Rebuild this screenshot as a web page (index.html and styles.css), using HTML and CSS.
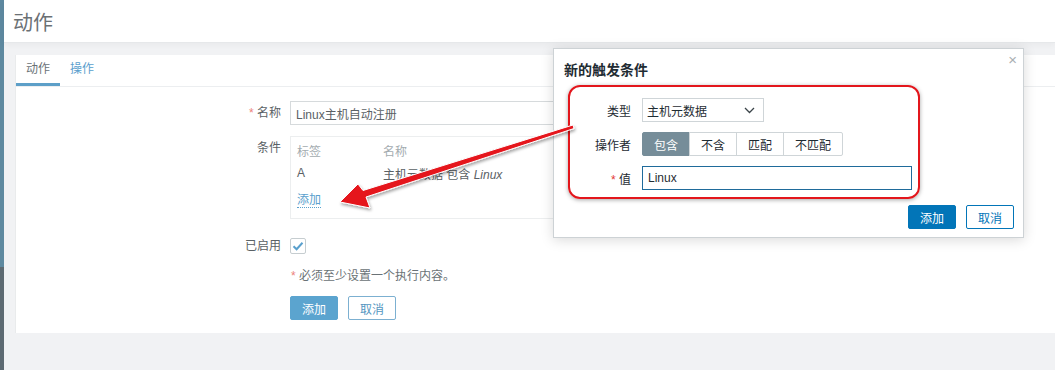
FILE: index.html
```html
<!DOCTYPE html>
<html lang="zh-CN">
<head>
    <meta charset="utf-8">
    <title>动作</title>
    <link rel="stylesheet" href="styles.css">
</head>
<body>
    <div class="layout">
        <aside class="sidebar"></aside>

        <main class="page">
            <header class="page-header">
                <h1>动作</h1>
            </header>

            <div class="page-body">
                <div class="card">
                    <ul class="tabs">
                        <li class="tab active">动作</li>
                        <li class="tab"><a href="#">操作</a></li>
                    </ul>

                    <div class="form">
                        <div class="form-row">
                            <label class="form-label"><span class="req">*</span> 名称</label>
                            <input class="text-input" type="text" value="Linux主机自动注册">
                        </div>

                        <div class="form-row conditions-row">
                            <label class="form-label">条件</label>
                            <div class="conditions">
                                <div class="cond-line cond-head">
                                    <span class="cond-tag">标签</span>
                                    <span>名称</span>
                                </div>
                                <div class="cond-line">
                                    <span class="cond-tag">A</span>
                                    <span>主机元数据 包含 <em>Linux</em></span>
                                </div>
                                <div class="cond-add"><a href="#">添加</a></div>
                            </div>
                        </div>

                        <div class="form-row">
                            <label class="form-label">已启用</label>
                            <span class="checkbox">
                                <svg width="12" height="10" viewBox="0 0 12 10"><path d="M1.5 5.2 L4.6 8.2 L10.5 1.8" fill="none" stroke="#5aa0cd" stroke-width="2"/></svg>
                            </span>
                        </div>

                        <div class="form-row note-row">
                            <span class="req">*</span> 必须至少设置一个执行内容。
                        </div>

                        <div class="form-row buttons-row">
                            <button class="btn btn-primary">添加</button>
                            <button class="btn btn-outline">取消</button>
                        </div>
                    </div>
                </div>
            </div>
        </main>

        <div class="dialog">
            <span class="dialog-close">&times;</span>
            <h2 class="dialog-title">新的触发条件</h2>

            <div class="dialog-body">
                <div class="d-row">
                    <label class="d-label">类型</label>
                    <div class="select">
                        <span>主机元数据</span>
                        <svg width="11" height="7" viewBox="0 0 11 7"><path d="M1 1 L5.5 5.5 L10 1" fill="none" stroke="#3b4449" stroke-width="1.3"/></svg>
                    </div>
                </div>
                <div class="d-row">
                    <label class="d-label">操作者</label>
                    <div class="segmented">
                        <span class="seg on">包含</span>
                        <span class="seg">不含</span>
                        <span class="seg">匹配</span>
                        <span class="seg wide">不匹配</span>
                    </div>
                </div>
                <div class="d-row">
                    <label class="d-label"><span class="req-strong">*</span> 值</label>
                    <input class="text-input focused" type="text" value="Linux">
                </div>
            </div>

            <div class="highlight"></div>

            <div class="dialog-footer">
                <button class="btn btn-blue">添加</button>
                <button class="btn btn-blue-outline">取消</button>
            </div>
        </div>

        <svg class="arrow" width="1055" height="370" viewBox="0 0 1055 370">
            <defs>
                <filter id="shade" x="-10%" y="-30%" width="120%" height="160%">
                    <feDropShadow dx="1" dy="2" stdDeviation="1.5" flood-color="#000" flood-opacity="0.35"/>
                </filter>
            </defs>
            <polygon points="340,202 358,184 363,190.5 573,125 574,128.5 366,197 370,208"
                     fill="#e5121a" stroke="#fff" stroke-width="1" stroke-linejoin="round" filter="url(#shade)"/>
        </svg>
    </div>
</body>
</html>
```

FILE: styles.css
```css
* {
    box-sizing: border-box;
}

body {
    margin: 0;
    font-family: "Liberation Sans", "Noto Sans CJK SC", sans-serif;
    font-size: 12px;
    color: #5a6165;
    background-color: #f1f2f4;
}

.layout {
    position: relative;
    display: flex;
    height: 370px;
    overflow: hidden;
}

.sidebar {
    width: 4px;
    flex: none;
    background: linear-gradient(#5e89a0 0 267px, #5d6a72 267px);
}

.page {
    flex: 1;
    display: flex;
    flex-direction: column;
}

.page-header {
    height: 43px;
    background-color: #fff;
    border-bottom: 1px solid #e6e8ea;
    box-shadow: 0 2px 6px rgba(0, 0, 0, 0.04);
    padding-left: 9px;
    display: flex;
    align-items: center;
}

.page-header h1 {
    margin: 0;
    font-size: 20px;
    font-weight: normal;
    color: #6b7074;
}

.page-body {
    padding: 12px 0 0 11px;
}

.card {
    height: 278px;
    background-color: #fff;
    border-left: 1px solid #e9ebec;
}

/* tabs */
.tabs {
    display: flex;
    margin: 0;
    padding: 0;
    list-style: none;
    height: 32px;
    border-bottom: 1px solid #eceef0;
}

.tab {
    padding: 0 10px;
    line-height: 28px;
    border-bottom: 3px solid transparent;
}

.tab.active {
    border-bottom-color: #5d9fc8;
    color: #6a7276;
}

.tab a {
    color: #5aa0cd;
    text-decoration: none;
}

/* form */
.form {
    padding-top: 14px;
}

.form-row {
    display: flex;
    align-items: center;
    margin-bottom: 11px;
}

.form-label {
    width: 265px;
    margin-right: 9px;
    text-align: right;
    line-height: 24px;
}

.req {
    color: #ec7f7c;
}

.text-input {
    width: 453px;
    height: 24px;
    margin: 0;
    padding: 0 5px;
    border: 1px solid #d6dadc;
    border-radius: 0;
    font-family: inherit;
    font-size: 12px;
    color: #5a6165;
    background-color: #fff;
    outline: none;
}

.conditions-row {
    align-items: flex-start;
    margin-bottom: 15px;
}

.conditions {
    width: 453px;
    padding: 1px 6px 7px;
    border: 1px solid #eceeef;
}

.cond-line {
    display: flex;
    height: 22px;
    align-items: center;
}

.cond-head {
    height: 24px;
    color: #a3abaf;
}

.cond-tag {
    width: 86px;
}

.cond-add {
    margin-top: 5px;
    height: 22px;
    line-height: 22px;
}

.cond-add a {
    color: #5aa0cd;
    text-decoration: none;
    border-bottom: 1px dotted #5aa0cd;
}

.checkbox {
    width: 16px;
    height: 16px;
    border: 1px solid #c6cdd0;
    border-radius: 2px;
    display: flex;
    align-items: center;
    justify-content: center;
}

.note-row {
    padding-left: 275px;
    line-height: 16px;
    margin-top: -1px;
    margin-bottom: 12px;
    display: block;
    color: #6a7276;
}

.buttons-row {
    padding-left: 274px;
    gap: 10px;
}

.btn {
    width: 48px;
    height: 24px;
    padding: 0;
    border-radius: 2px;
    font-family: inherit;
    font-size: 12px;
    cursor: pointer;
}

.btn-primary {
    background-color: #5ba4cf;
    border: 1px solid #5ba4cf;
    color: #fff;
}

.btn-outline {
    background-color: #fff;
    border: 1px solid #7cb0d1;
    color: #5596bf;
}

/* dialog */
.dialog {
    position: absolute;
    left: 553px;
    top: 48px;
    width: 471px;
    height: 190px;
    background-color: #fff;
    border: 1px solid #cdd2d5;
    box-shadow: 0 2px 12px rgba(0, 0, 0, 0.15);
    color: #1f2c33;
}

.dialog-close {
    position: absolute;
    top: 4px;
    right: 6px;
    font-size: 15px;
    line-height: 14px;
    color: #a9afb3;
}

.dialog-title {
    margin: 0;
    padding: 12px 10px 0;
    font-size: 14px;
    line-height: 18px;
    font-weight: bold;
    color: #1f2c33;
}

.dialog-body {
    padding-top: 19px;
    display: flex;
    flex-direction: column;
    gap: 10px;
}

.d-row {
    display: flex;
    align-items: center;
    height: 24px;
}

.d-label {
    width: 77px;
    margin-right: 11px;
    text-align: right;
}

.req-strong {
    color: #e33734;
}

.select {
    width: 122px;
    height: 24px;
    border: 1px solid #cfd5d8;
    padding: 0 8px 0 4px;
    display: flex;
    align-items: center;
    justify-content: space-between;
}

.segmented {
    display: flex;
    height: 24px;
}

.seg {
    width: 48px;
    height: 24px;
    border: 1px solid #cfd5d8;
    margin-left: -1px;
    display: flex;
    align-items: center;
    justify-content: center;
}

.seg:first-child {
    margin-left: 0;
    border-radius: 2px 0 0 2px;
}

.seg.wide {
    width: 60px;
    border-radius: 0 2px 2px 0;
}

.seg.on {
    background-color: #768d99;
    border-color: #768d99;
    color: #fff;
}

.text-input.focused {
    width: 270px;
    border-color: #1f6b9b;
    color: #1f2c33;
}

.highlight {
    position: absolute;
    left: 14px;
    top: 36px;
    width: 352px;
    height: 114px;
    border: 2px solid #e3161c;
    border-radius: 12px;
    box-shadow: 0 1px 4px rgba(0, 0, 0, 0.35);
    pointer-events: none;
}

.dialog-footer {
    margin-top: 15px;
    padding-right: 9px;
    display: flex;
    justify-content: flex-end;
    gap: 10px;
}

.btn-blue {
    background-color: #0275b8;
    border: 1px solid #0275b8;
    color: #fff;
}

.btn-blue-outline {
    background-color: #fff;
    border: 1px solid #0275b8;
    color: #0275b8;
}

.arrow {
    position: absolute;
    left: 0;
    top: 0;
    pointer-events: none;
}
```
